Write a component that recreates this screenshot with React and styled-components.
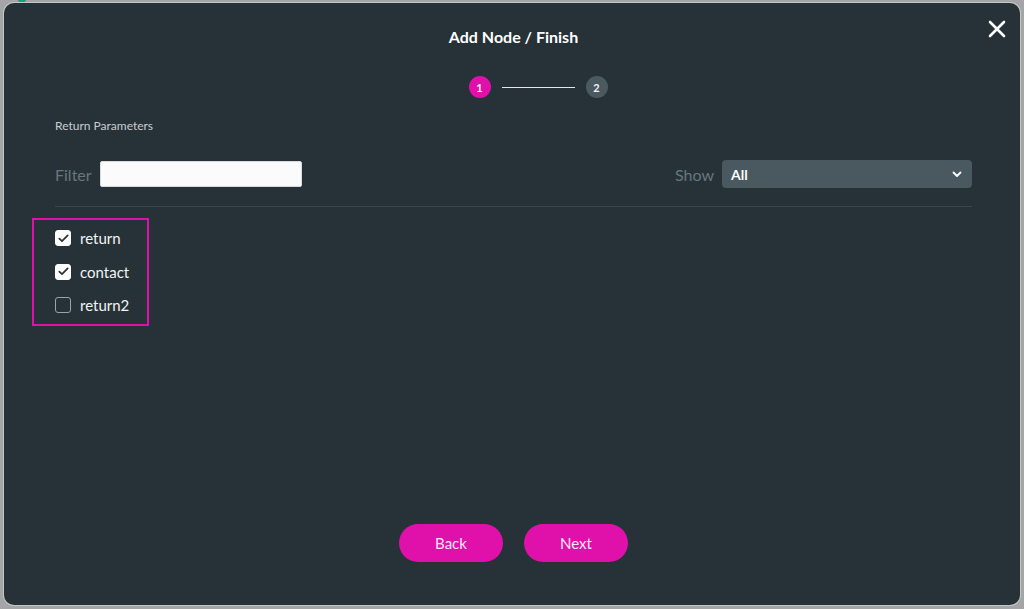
import styled, { createGlobalStyle } from "styled-components"

const GlobalStyle = createGlobalStyle`
  html, body {
    margin: 0;
    padding: 0;
    background: #a3a5a7;
    font-family: Lato, "Open Sans", "Liberation Sans", sans-serif;
  }
`

const Page = styled.div`
  width: 1024px;
  height: 609px;
  box-sizing: border-box;
  padding: 3px 4px 4px 4px;
  position: relative;
`

const Dot = styled.div`
  position: absolute;
  left: 18px;
  top: 0;
  width: 8px;
  height: 2px;
  border-radius: 0 0 3px 3px;
  background: #1e9f7c;
`

const Modal = styled.div`
  position: relative;
  height: 100%;
  box-sizing: border-box;
  background: #263238;
  border-radius: 10px;
  box-shadow: 0 0 0 1px #c4c6c8;
  padding: 24px 48px 43px 51px;
  display: flex;
  flex-direction: column;
  color: #ffffff;
`

const Close = styled.button`
  position: absolute;
  top: 15px;
  right: 12px;
  width: 22px;
  height: 22px;
  padding: 0;
  border: none;
  background: none;
  cursor: pointer;
  display: flex;
  align-items: center;
  justify-content: center;
`

const Title = styled.h2`
  margin: 0;
  text-align: center;
  font-size: 16px;
  line-height: 20px;
  font-weight: 700;
`

const Stepper = styled.div`
  margin-top: 29px;
  display: flex;
  justify-content: center;
  align-items: center;
  gap: 11px;
  padding-left: 49px;
`

const Step = styled.div`
  width: 22px;
  height: 22px;
  border-radius: 50%;
  background: ${p => (p.$active ? "#e010ab" : "#4b5961")};
  color: #f2f2f2;
  font-size: 11px;
  font-weight: 700;
  display: flex;
  align-items: center;
  justify-content: center;
`

const StepLine = styled.div`
  width: 73px;
  height: 1px;
  background: #e6e6e6;
`

const SectionLabel = styled.div`
  margin-top: 20px;
  font-size: 12px;
  line-height: 16px;
  color: #c9cdd0;
`

const FilterRow = styled.div`
  margin-top: 26px;
  height: 28px;
  display: flex;
  align-items: center;
  justify-content: space-between;
`

const Field = styled.label`
  display: flex;
  align-items: center;
  gap: 8px;
  font-size: 16px;
  color: #69767e;
`

const TextInput = styled.input`
  width: 202px;
  height: 26px;
  box-sizing: border-box;
  border: 1px solid #d9d9d9;
  border-radius: 2px;
  background: #fbfbfb;
  outline: none;
`

const Select = styled.div`
  width: 250px;
  height: 28px;
  box-sizing: border-box;
  padding: 0 10px 0 9px;
  border-radius: 4px;
  background: #4a5960;
  display: flex;
  align-items: center;
  justify-content: space-between;
  color: #ffffff;
  font-size: 14px;
  font-weight: 700;
`

const Divider = styled.div`
  margin-top: 18px;
  height: 1px;
  background: #3a464d;
`

const Highlight = styled.div`
  margin-top: 11px;
  margin-left: -23px;
  width: 117px;
  box-sizing: border-box;
  border: 2px solid #e010ab;
  padding: 6px 0 7px 21px;
  display: flex;
  flex-direction: column;
  gap: 9.5px;
`

const CheckRow = styled.label`
  height: 24px;
  display: flex;
  align-items: center;
  gap: 9px;
  font-size: 15px;
  color: #f3f3f3;
`

const Box = styled.span`
  width: 16px;
  height: 16px;
  box-sizing: border-box;
  border-radius: 3px;
  border: 1px solid ${p => (p.$checked ? "#ffffff" : "#9aa3a8")};
  background: ${p => (p.$checked ? "#ffffff" : "transparent")};
  display: flex;
  align-items: center;
  justify-content: center;
`

const Footer = styled.div`
  margin-top: auto;
  display: flex;
  justify-content: center;
  gap: 21px;
`

const PillButton = styled.button`
  width: 104px;
  height: 38px;
  border: none;
  border-radius: 19px;
  background: #e010ab;
  color: #fbe9f5;
  font-family: inherit;
  font-size: 15px;
  cursor: pointer;
`

const params = [
  { name: "return", checked: true },
  { name: "contact", checked: true },
  { name: "return2", checked: false },
]

export default function App() {
  return (
    <Page>
      <GlobalStyle />
      <Dot />
      <Modal>
        <Close aria-label="close">
          <svg width="18" height="18" viewBox="0 0 18 18">
            <path d="M2 2 L16 16 M16 2 L2 16" stroke="#fff" strokeWidth="2.6" strokeLinecap="round" />
          </svg>
        </Close>
        <Title>Add Node / Finish</Title>
        <Stepper>
          <Step $active>1</Step>
          <StepLine />
          <Step>2</Step>
        </Stepper>
        <SectionLabel>Return Parameters</SectionLabel>
        <FilterRow>
          <Field>
            Filter
            <TextInput />
          </Field>
          <Field>
            Show
            <Select>
              <span>All</span>
              <svg width="10" height="7" viewBox="0 0 10 7">
                <path d="M1.5 1.5 L5 5 L8.5 1.5" stroke="#fff" strokeWidth="1.8" fill="none" strokeLinecap="round" strokeLinejoin="round" />
              </svg>
            </Select>
          </Field>
        </FilterRow>
        <Divider />
        <Highlight>
          {params.map(p => (
            <CheckRow key={p.name}>
              <Box $checked={p.checked}>
                {p.checked && (
                  <svg width="11" height="9" viewBox="0 0 11 9">
                    <path d="M1.3 4.6 L4 7.2 L9.7 1.4" stroke="#263238" strokeWidth="1.7" fill="none" strokeLinecap="round" strokeLinejoin="round" />
                  </svg>
                )}
              </Box>
              {p.name}
            </CheckRow>
          ))}
        </Highlight>
        <Footer>
          <PillButton>Back</PillButton>
          <PillButton>Next</PillButton>
        </Footer>
      </Modal>
    </Page>
  )
}
